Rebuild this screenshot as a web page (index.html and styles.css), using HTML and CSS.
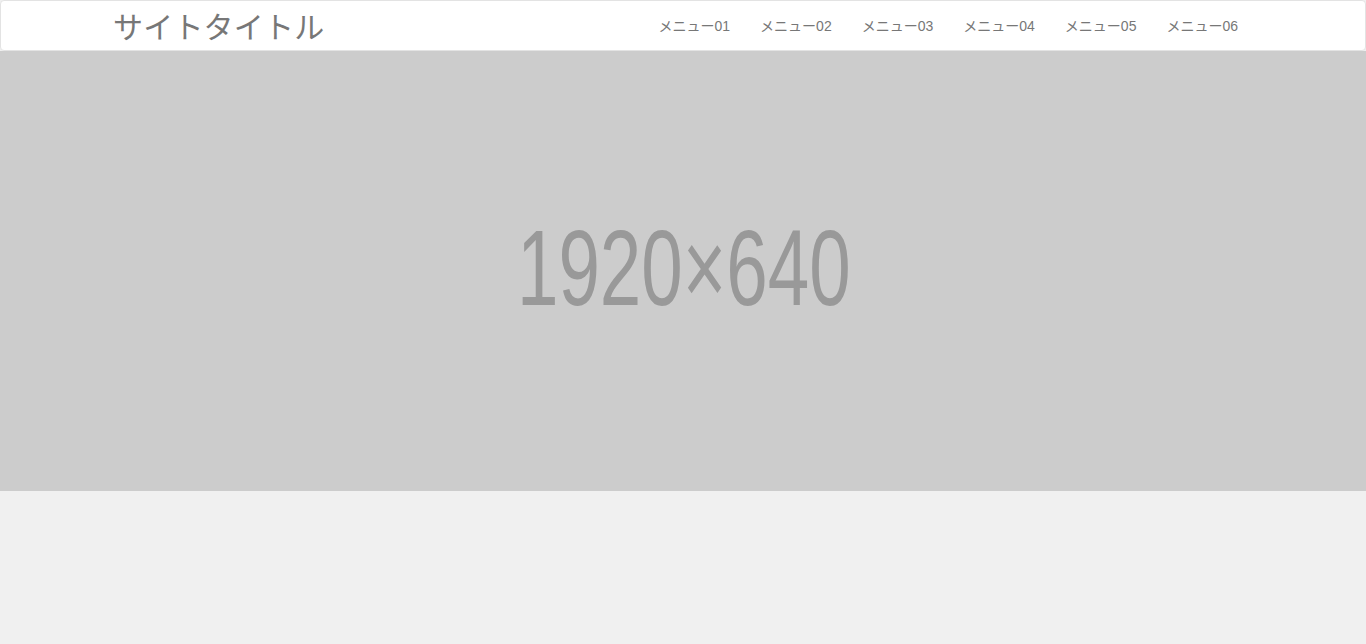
FILE: index.html
```html
<!DOCTYPE html>
<html lang="ja">
<head>
<meta charset="utf-8">
<title>サイトタイトル</title>
<link rel="stylesheet" href="styles.css">
</head>
<body>
<nav class="navbar">
  <div class="container">
    <a class="brand" href="#">サイトタイトル</a>
    <ul class="menu">
      <li><a href="#">メニュー01</a></li>
      <li><a href="#">メニュー02</a></li>
      <li><a href="#">メニュー03</a></li>
      <li><a href="#">メニュー04</a></li>
      <li><a href="#">メニュー05</a></li>
      <li><a href="#">メニュー06</a></li>
    </ul>
  </div>
</nav>
<div class="hero">
  <span class="hero-text">1920×640</span>
</div>
</body>
</html>
```
FILE: styles.css
```css
* { box-sizing: border-box; }
html, body { margin: 0; padding: 0; }
body {
  background: #f0f0f0;
  font-family: "Liberation Sans", Arial, "Noto Sans CJK JP", sans-serif;
  color: #777;
}
.navbar {
  height: 51px;
  background: #fff;
  border: 1px solid #e3e3e3;
  border-radius: 4px;
}
.container {
  width: 1170px;
  margin: 0 auto;
  padding: 0 15px;
  display: flex;
  align-items: center;
  justify-content: space-between;
  height: 49px;
}
.brand {
  font-family: "Noto Sans CJK JP", sans-serif;
  font-size: 30px;
  color: #777;
  text-decoration: none;
  line-height: 49px;
  letter-spacing: 0.2px;
}
.menu {
  list-style: none;
  margin: 0;
  padding: 0;
  display: flex;
}
.menu a {
  display: block;
  padding: 15px 15px 14px;
  line-height: 20px;
  font-size: 14px;
  color: #777;
  text-decoration: none;
}
.hero {
  height: 440px;
  background: #ccc;
  display: flex;
  align-items: center;
  justify-content: center;
}
.hero-text {
  display: inline-block;
  font-family: "Liberation Sans", Arial, sans-serif;
  font-size: 108px;
  line-height: 1;
  color: #999;
  transform: scaleX(0.69);
  margin-left: 2px;
  margin-top: -6px;
}
```
